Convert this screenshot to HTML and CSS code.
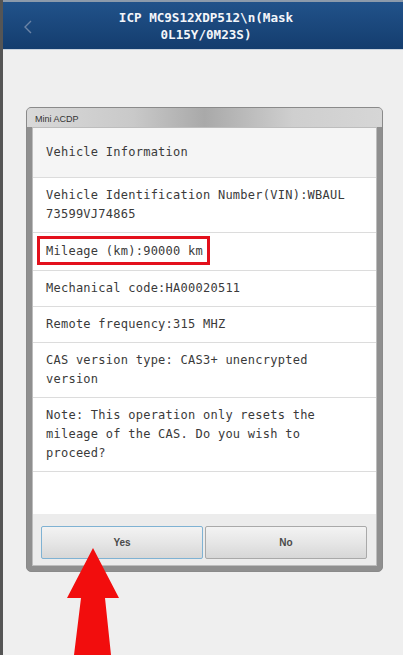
FILE: index.html
```html
<!DOCTYPE html>
<html lang="en">
  <head>
    <meta charset="UTF-8" />
    <title>ICP MC9S12XDP512</title>
    <link rel="stylesheet" href="styles.css">
  </head>
  <body>
    <div class="screen">
      <header class="topbar">
        <svg class="back" width="10" height="16" viewBox="0 0 10 16">
          <polyline points="8,2 2,8 8,14" fill="none" stroke="#6c84a6" stroke-width="1.4" />
        </svg>
        <h1 class="title">ICP MC9S12XDP512\n(Mask<br>0L15Y/0M23S)</h1>
      </header>

      <main class="content">
        <div class="dialog">
          <div class="dialog-title">Mini ACDP</div>
          <div class="dialog-body">
            <div class="row row-head">Vehicle Information</div>
            <div class="row">Vehicle Identification Number(VIN):WBAUL<br>73599VJ74865</div>
            <div class="row row-mark"><span class="marked">Mileage (km):90000 km</span></div>
            <div class="row">Mechanical code:HA00020511</div>
            <div class="row">Remote frequency:315 MHZ</div>
            <div class="row">CAS version type: CAS3+ unencrypted<br>version</div>
            <div class="row">Note: This operation only resets the<br>mileage of the CAS. Do you wish to<br>proceed?</div>
            <div class="spacer"></div>
            <div class="actions">
              <button class="btn btn-focus">Yes</button>
              <button class="btn">No</button>
            </div>
          </div>
        </div>
      </main>
    </div>

    <svg class="arrow" width="403" height="655" viewBox="0 0 403 655">
      <polygon points="93,548 67,598 81,598 74,655 111,655 105,598 119,598" fill="#f20d0d" />
    </svg>
  </body>
</html>
```

FILE: styles.css
```css
html, body {
  margin: 0;
  height: 100%;
}
body {
  background: #eeeeee;
  font-family: "DejaVu Sans Mono", "Liberation Mono", monospace;
  position: relative;
  overflow: hidden;
}
.screen {
  border-left: 3px solid #555;
  min-height: 100%;
  box-sizing: border-box;
  background: #efefef;
}
.topbar {
  height: 47px;
  border-top: 2px solid #8c9aab;
  border-bottom: 1px solid #c9d3de;
  background: linear-gradient(#21528a, #143d6e);
  display: flex;
  align-items: center;
  justify-content: center;
  position: relative;
}
.back {
  position: absolute;
  left: 20px;
  top: 17px;
}
.title {
  margin: 0;
  color: #f4f6fa;
  font-size: 12.6px;
  line-height: 17px;
  font-weight: bold;
  text-align: center;
  padding-left: 6px;
}
.content {
  padding: 57px 20px 0 23px;
}
.dialog {
  width: 357px;
  box-sizing: border-box;
  border: 1px solid #8a8a8a;
  border-radius: 5px;
  background: #8f8f8f;
  padding: 0 5px 5px 5px;
}
.dialog-title {
  height: 19px;
  margin: 0 -5px;
  padding: 0 8px;
  border-radius: 4px 4px 0 0;
  background: linear-gradient(to right, #d9d9d9, #c9c9c9 30%, #a9a9a9 50%, #cfcfcf 75%, #d6d6d6);
  font-family: "Liberation Sans", Arial, sans-serif;
  font-size: 9px;
  line-height: 22px;
  color: #333;
}
.dialog-body {
  background: #fff;
  border: 1px solid #bdbdbd;
  display: flex;
  flex-direction: column;
}
.row {
  padding: 8px 13px;
  font-size: 12px;
  letter-spacing: 0.25px;
  line-height: 19px;
  color: #3a3a3a;
  border-bottom: 1px solid #dcdcdc;
}
.row-head {
  padding: 15px 13px;
  background: #f5f5f5;
}
.row-mark {
  padding: 9px 13px;
}
.marked {
  position: relative;
}
.marked::after {
  content: "";
  position: absolute;
  left: -9px;
  right: -7px;
  top: -8px;
  bottom: -7px;
  border: 3px solid #e3101c;
}
.spacer {
  height: 42px;
}
.actions {
  background: #ececec;
  padding: 12px 9px 6px 8px;
  display: flex;
  gap: 2px;
}
.btn {
  flex: 1;
  height: 33px;
  border: 1px solid #a9a9a9;
  border-radius: 2px;
  background: linear-gradient(#f3f3f3, #e6e6e6 50%, #d7d7d7);
  font-family: "Liberation Sans", Arial, sans-serif;
  font-size: 10px;
  font-weight: bold;
  color: #4a4a4a;
}
.btn-focus {
  border-color: #7fb2d3;
}
.arrow {
  position: absolute;
  left: 0;
  top: 0;
  pointer-events: none;
}
```
